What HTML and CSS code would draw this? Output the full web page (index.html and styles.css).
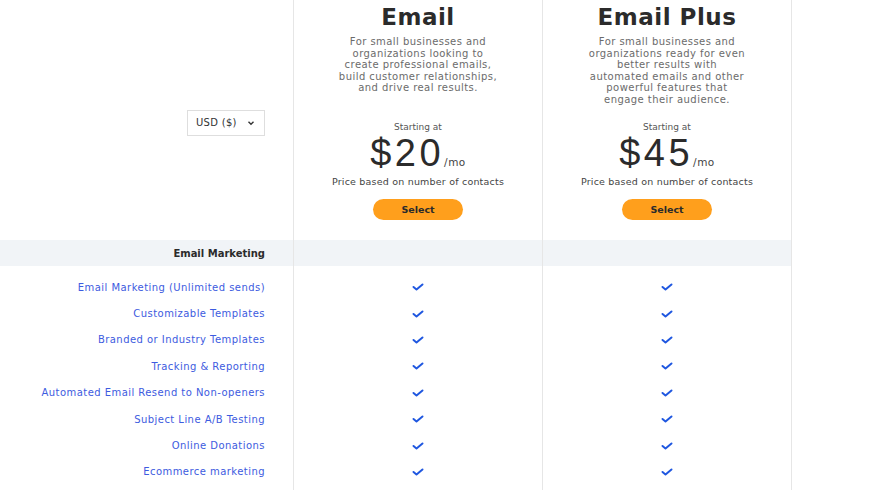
FILE: index.html
```html
<!DOCTYPE html>
<html lang="en">
<head>
    <meta charset="UTF-8">
    <meta name="viewport" content="width=device-width, initial-scale=1.0">
    <title>Email Plans</title>
    <link rel="stylesheet" href="styles.css">
</head>
<body>
    <div class="grid" id="table">
        <div class="cell side head-side">
            <div class="currency">
                <span>USD ($)</span>
                <svg width="8" height="6" viewBox="0 0 8 6"><path d="M1.5 1.8 L4 4.2 L6.5 1.8" fill="none" stroke="#333" stroke-width="1.4"/></svg>
            </div>
        </div>
        <div class="cell plan">
            <h2>Email</h2>
            <p class="desc">For small businesses and organizations looking to create professional emails, build customer relationships, and drive real results.</p>
            <div class="start">Starting at</div>
            <div class="price">$20<span class="mo">/mo</span></div>
            <div class="note">Price based on number of contacts</div>
            <button class="select">Select</button>
        </div>
        <div class="cell plan">
            <h2>Email Plus</h2>
            <p class="desc">For small businesses and organizations ready for even better results with automated emails and other powerful features that engage their audience.</p>
            <div class="start">Starting at</div>
            <div class="price">$45<span class="mo">/mo</span></div>
            <div class="note">Price based on number of contacts</div>
            <button class="select">Select</button>
        </div>
        <div class="cell empty"></div>

        <div class="cell side band section">Email Marketing</div>
        <div class="cell band"></div>
        <div class="cell band"></div>
        <div class="cell empty"></div>

        <div class="cell gap"></div>
        <div class="cell gap"></div>
        <div class="cell gap"></div>
        <div class="cell empty"></div>
    </div>
    <script>
        const features = [
            "Email Marketing (Unlimited sends)",
            "Customizable Templates",
            "Branded or Industry Templates",
            "Tracking & Reporting",
            "Automated Email Resend to Non-openers",
            "Subject Line A/B Testing",
            "Online Donations",
            "Ecommerce marketing"
        ];
        const check = '<svg width="12" height="8" viewBox="0 0 12 8"><path d="M1.5 4 L4.5 6.5 L10.5 1.5" fill="none" stroke="#1f57e0" stroke-width="2" stroke-linejoin="round" stroke-linecap="round"/></svg>';
        const table = document.getElementById("table");
        let html = "";
        for (const f of features) {
            html += `<div class="cell side feature">${f.replace("&", "&amp;")}</div>`;
            html += `<div class="cell mark">${check}</div>`;
            html += `<div class="cell mark">${check}</div>`;
            html += `<div class="cell empty"></div>`;
        }
        html += '<div class="cell gap"></div><div class="cell gap"></div><div class="cell gap"></div><div class="cell empty"></div>';
        table.insertAdjacentHTML("beforeend", html);
    </script>
</body>
</html>
```

FILE: styles.css
```css
body {
    margin: 0;
    background: #fff;
    font-family: "DejaVu Sans", sans-serif;
    color: #333;
}
.grid {
    display: grid;
    grid-template-columns: 294px 249px 249px 1fr;
}
.cell {
    border-right: 1px solid #e6e6e6;
}
.cell.empty {
    border-right: none;
}
.gap {
    height: 8px;
}
.head-side {
    height: 240px;
    display: flex;
    align-items: center;
    justify-content: flex-end;
    padding-right: 28px;
    box-sizing: border-box;
}
.currency {
    width: 78px;
    height: 26px;
    box-sizing: border-box;
    border: 1px solid #dedede;
    margin-top: 5px;
    display: flex;
    align-items: center;
    justify-content: space-between;
    padding: 0 9px 0 8px;
    font-size: 10px;
    letter-spacing: 0.3px;
    color: #333;
}
.plan {
    text-align: center;
    display: flex;
    flex-direction: column;
    align-items: center;
}
.plan h2 {
    margin: 3px 0 0;
    font-size: 23px;
    letter-spacing: 0.5px;
    font-weight: bold;
    color: #2b2b2b;
    line-height: 28px;
}
.desc {
    margin: 5px 0 0;
    width: 162px;
    height: 86px;
    font-size: 10px;
    letter-spacing: 0.45px;
    line-height: 11.6px;
    color: #6b6b6b;
}
.start {
    font-size: 9px;
    line-height: 10px;
    color: #555;
}
.price {
    font-family: "Liberation Sans", sans-serif;
    font-size: 38px;
    letter-spacing: 3.5px;
    line-height: 36px;
    margin-top: 3px;
    color: #2b2b2b;
}
.mo {
    font-family: "DejaVu Sans", sans-serif;
    font-size: 10.5px;
    letter-spacing: 0.5px;
    line-height: 0;
    color: #444;
}
.note {
    font-size: 9.5px;
    letter-spacing: 0.2px;
    line-height: 12px;
    color: #444;
    margin-top: 5px;
}
.select {
    margin-top: 11px;
    width: 90px;
    height: 21px;
    border: none;
    border-radius: 11px;
    background: #ff9f1c;
    color: #2b2b2b;
    font-family: "DejaVu Sans", sans-serif;
    font-weight: bold;
    font-size: 9.5px;
}
.band {
    background: #f1f4f7;
    height: 26px;
}
.section {
    display: flex;
    align-items: center;
    justify-content: flex-end;
    padding-right: 28px;
    font-size: 10px;
    font-weight: bold;
    color: #2b2b2b;
}
.feature {
    height: 26.4px;
    display: flex;
    align-items: center;
    justify-content: flex-end;
    padding-right: 28px;
    font-size: 10px;
    letter-spacing: 0.45px;
    color: #3d5be0;
}
.mark {
    display: flex;
    align-items: center;
    justify-content: center;
}
```
